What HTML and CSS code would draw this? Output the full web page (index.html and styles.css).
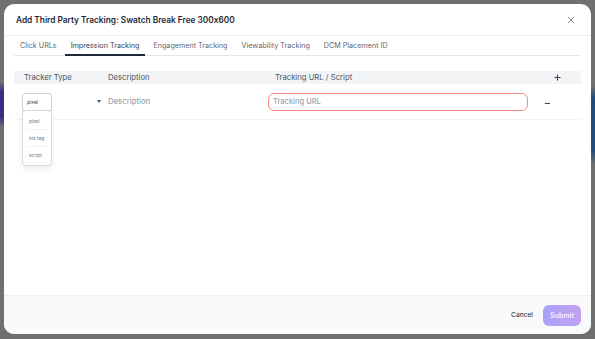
FILE: index.html
```html
<!DOCTYPE html>
<html>
    <head>
        <title>Add Third Party Tracking</title>
        <link rel="stylesheet" href="styles.css">
    </head>
    <body>
        <div class="modal">
            <div class="modal-header">
                <h2>Add Third Party Tracking: Swatch Break Free 300x600</h2>
                <span class="close-btn">
                    <svg xmlns="http://www.w3.org/2000/svg" width="8" height="8" viewBox="0 0 8 8">
                        <path d="M1 1L7 7M7 1L1 7"/>
                    </svg>
                </span>
            </div>
            <div class="tabs">
                <span class="tab">Click URLs</span>
                <span class="tab active">Impression Tracking</span>
                <span class="tab">Engagement Tracking</span>
                <span class="tab">Viewability Tracking</span>
                <span class="tab">DCM Placement ID</span>
            </div>
            <div class="modal-body">
                <div class="tracker-table">
                    <div class="table-head">
                        <span class="col-type">Tracker Type</span>
                        <span class="col-desc">Description</span>
                        <span class="col-url">Tracking URL / Script</span>
                        <span class="col-action">
                            <svg xmlns="http://www.w3.org/2000/svg" width="7" height="7" viewBox="0 0 7 7">
                                <path d="M3.5 0.5V6.5M0.5 3.5H6.5"/>
                            </svg>
                        </span>
                    </div>
                    <div class="table-row">
                        <div class="col-type">
                            <div class="type-select">
                                <div class="select-box">pixel</div>
                                <div class="select-menu">
                                    <div class="select-option">pixel</div>
                                    <div class="select-option">ins tag</div>
                                    <div class="select-option">script</div>
                                </div>
                            </div>
                            <span class="caret"></span>
                        </div>
                        <div class="col-desc placeholder">Description</div>
                        <div class="col-url">
                            <div class="url-input">Tracking URL</div>
                        </div>
                        <div class="col-action minus">&minus;</div>
                    </div>
                </div>
            </div>
            <div class="modal-footer">
                <a href="#" class="cancel-link">Cancel</a>
                <a href="#" class="submit-btn">Submit</a>
            </div>
        </div>
    </body>
</html>
```

FILE: styles.css
```css
body {
    margin: 0;
    height: 339px;
    overflow: hidden;
    font-family: Inter, "Noto Sans", sans-serif;
    font-feature-settings: "calt" 0;
    background:
        linear-gradient(to bottom, transparent 82px, #3a2b85 92px, #3a2b85 116px, transparent 128px) left top / 4px 100% no-repeat,
        linear-gradient(to bottom, transparent 86px, #1f4d7c 98px, #1f4d7c 150px, transparent 165px) right top / 4px 100% no-repeat,
        #707070;
}

.modal {
    margin: 4px;
    width: 587px;
    height: 330px;
    background: #ffffff;
    border-radius: 10px;
    display: flex;
    flex-direction: column;
    overflow: hidden;
}

.modal-header {
    height: 32px;
    padding: 0 16px 0 12px;
    display: flex;
    align-items: center;
    justify-content: space-between;
    border-bottom: 1px solid #eef0f3;
    box-sizing: border-box;
}

h2 {
    margin: 0;
    font-size: 8.3px;
    font-weight: 600;
    color: #1f2937;
}

.close-btn svg {
    display: block;
    stroke: #6b7280;
    stroke-width: 0.9;
    fill: none;
}

.tabs {
    margin: 0 10px;
    height: 20px;
    display: flex;
    border-bottom: 1px solid #e5e7eb;
    box-sizing: border-box;
}

.tab {
    padding: 0 6px;
    margin-right: 2px;
    display: flex;
    align-items: center;
    font-size: 7.2px;
    color: #5f6673;
    border-bottom: 2px solid transparent;
    margin-bottom: -1px;
}

.tab.active {
    color: #374151;
    border-bottom-color: #1f2937;
}

.modal-body {
    flex: 1;
    padding: 15px 10px 0;
}

.tracker-table {
    font-size: 7.7px;
}

.table-head,
.table-row {
    display: grid;
    grid-template-columns: 94px 160px 1fr 38px;
}

.table-head {
    height: 13px;
    align-items: center;
    background: #f3f4f6;
    color: #4b5563;
}

.table-head .col-type {
    padding-left: 10px;
}

.table-head .col-url {
    padding-left: 7px;
}

.table-head .col-action {
    padding-left: 11px;
    display: flex;
}

.table-head .col-action svg {
    stroke: #374151;
    stroke-width: 1;
    fill: none;
}

.table-row {
    height: 35px;
    align-items: center;
    border-bottom: 1px solid #f3f4f6;
}

.table-row .col-type {
    display: flex;
    align-items: center;
    padding-left: 8px;
}

.type-select {
    position: relative;
    width: 30px;
}

.select-box {
    height: 18px;
    box-sizing: border-box;
    border: 1px solid #cfd4dc;
    border-radius: 3px 3px 0 0;
    font-size: 5px;
    color: #374151;
    padding-left: 4px;
    display: flex;
    align-items: center;
}

.select-menu {
    position: absolute;
    top: 17px;
    left: 0;
    width: 30px;
    box-sizing: border-box;
    background: #ffffff;
    border: 1px solid #d7dbe1;
    border-radius: 4px;
    box-shadow: 0 3px 6px rgba(0, 0, 0, 0.08);
    padding: 2px 3px;
}

.select-option {
    height: 16px;
    display: flex;
    align-items: center;
    padding-left: 3px;
    font-size: 4.8px;
    color: #6b7280;
    border-bottom: 1px solid #f3f4f6;
}

.select-option:last-child {
    border-bottom: none;
}

.caret {
    margin-left: 45px;
    width: 0;
    height: 0;
    border-left: 2.5px solid transparent;
    border-right: 2.5px solid transparent;
    border-top: 3px solid #4b5563;
}

.placeholder {
    font-weight: 500;
    color: #9ca3af;
}

.url-input {
    width: 260px;
    height: 18px;
    box-sizing: border-box;
    border: 1px solid #f58b85;
    border-radius: 6px;
    padding-left: 4px;
    display: flex;
    align-items: center;
    font-size: 7.5px;
    font-weight: 500;
    color: #9ca3af;
}

.minus {
    font-size: 10px;
    font-weight: 600;
    color: #374151;
    padding-left: 1px;
}

.modal-footer {
    height: 39px;
    background: #f9fafb;
    border-top: 1px solid #eef0f3;
    box-sizing: border-box;
    display: flex;
    align-items: center;
    justify-content: flex-end;
    gap: 10px;
    padding-right: 10px;
}

.cancel-link {
    font-size: 6.6px;
    font-weight: 500;
    color: #374151;
    text-decoration: none;
}

.submit-btn {
    width: 38px;
    height: 21px;
    border-radius: 6px;
    background: linear-gradient(to right, #a8a2fa, #c4a1f1);
    color: #f4f1ff;
    font-size: 7px;
    font-weight: 600;
    text-decoration: none;
    display: flex;
    align-items: center;
    justify-content: center;
}
```
